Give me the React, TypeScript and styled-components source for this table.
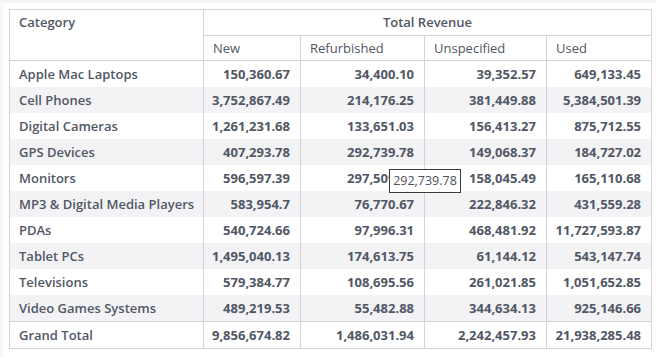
import React from 'react'
import styled, { createGlobalStyle } from 'styled-components';

const GlobalStyle = createGlobalStyle`
    html, body {
        margin: 0;
        padding: 0;
        background: #ffffff;
    }
    body {
        font-family: "Open Sans", "Noto Sans", sans-serif;
    }
`;

const Page = styled.div`
    position: relative;
    width: 656px;
    height: 357px;
    box-sizing: border-box;
    padding: 6px 6px 0 6px;
    border-top: 3px solid #f3f3f4;
    border-left: 3px solid #f7f7f8;
`;

const Table = styled.table`
    border-collapse: collapse;
    table-layout: fixed;
    width: 642px;
    border: 1px solid #d3d3db;
    color: #515764;
    font-size: 13px;
`;

const HeadCell = styled.th<{ $align?: string; $bold?: boolean; $sub?: boolean }>`
    height: ${(props) => (props.$sub ? '24px' : '25px')};
    padding: 0 9px;
    text-align: ${(props) => props.$align || 'left'};
    vertical-align: ${(props) => (props.$align === 'center' ? 'middle' : 'top')};
    line-height: ${(props) => (props.$sub ? '24px' : '25px')};
    font-weight: ${(props) => (props.$bold ? 600 : 400)};
    border: 1px solid #d3d3db;
    white-space: nowrap;
`;

const Row = styled.tr<{ $shade?: boolean; $total?: boolean }>`
    background-color: ${(props) => (props.$shade ? '#f3f3f6' : '#ffffff')};
    border-top: ${(props) => (props.$total ? '1px solid #d3d3db' : 'none')};
`;

const LabelCell = styled.td`
    height: 26px;
    padding: 0 9px;
    font-weight: 600;
    border-left: 1px solid #d3d3db;
    border-right: 1px solid #d3d3db;
    white-space: nowrap;
`;

const ValueCell = styled.td`
    height: 26px;
    padding: 0 10px 0 6px;
    text-align: right;
    font-weight: 700;
    border-left: 1px solid #d3d3db;
    border-right: 1px solid #d3d3db;
    white-space: nowrap;
`;

// hover tooltip over the Monitors / Refurbished cell
const Tooltip = styled.div`
    position: absolute;
    left: 386px;
    top: 166px;
    width: 72px;
    height: 24px;
    box-sizing: border-box;
    border: 1px solid #3a3a3a;
    background: #ffffff;
    color: #4a505c;
    font-size: 12.5px;
    line-height: 22px;
    text-align: center;
`;

const columns = ['New', 'Refurbished', 'Unspecified', 'Used'];

const rows: [string, string[]][] = [
    ['Apple Mac Laptops', ['150,360.67', '34,400.10', '39,352.57', '649,133.45']],
    ['Cell Phones', ['3,752,867.49', '214,176.25', '381,449.88', '5,384,501.39']],
    ['Digital Cameras', ['1,261,231.68', '133,651.03', '156,413.27', '875,712.55']],
    ['GPS Devices', ['407,293.78', '292,739.78', '149,068.37', '184,727.02']],
    ['Monitors', ['596,597.39', '297,509.15', '158,045.49', '165,110.68']],
    ['MP3 & Digital Media Players', ['583,954.7', '76,770.67', '222,846.32', '431,559.28']],
    ['PDAs', ['540,724.66', '97,996.31', '468,481.92', '11,727,593.87']],
    ['Tablet PCs', ['1,495,040.13', '174,613.75', '61,144.12', '543,147.74']],
    ['Televisions', ['579,384.77', '108,695.56', '261,021.85', '1,051,652.85']],
    ['Video Games Systems', ['489,219.53', '55,482.88', '344,634.13', '925,146.66']],
];

const totals = ['9,856,674.82', '1,486,031.94', '2,242,457.93', '21,938,285.48'];

const App: React.FC = () => {
    return (
        <Page>
            <GlobalStyle />
            <Table>
                <colgroup>
                    <col style={{ width: 194 }} />
                    <col style={{ width: 97 }} />
                    <col style={{ width: 124 }} />
                    <col style={{ width: 122 }} />
                    <col style={{ width: 105 }} />
                </colgroup>
                <thead>
                    <tr>
                        <HeadCell rowSpan={2} $bold>Category</HeadCell>
                        <HeadCell colSpan={4} $align="center" $bold>Total Revenue</HeadCell>
                    </tr>
                    <tr>
                        {columns.map((c) => (
                            <HeadCell key={c} $sub>{c}</HeadCell>
                        ))}
                    </tr>
                </thead>
                <tbody>
                    {rows.map(([label, values], i) => (
                        <Row key={label} $shade={i % 2 === 1}>
                            <LabelCell>{label}</LabelCell>
                            {values.map((v, j) => (
                                <ValueCell key={j}>{v}</ValueCell>
                            ))}
                        </Row>
                    ))}
                    <Row $total>
                        <LabelCell>Grand Total</LabelCell>
                        {totals.map((v, j) => (
                            <ValueCell key={j}>{v}</ValueCell>
                        ))}
                    </Row>
                </tbody>
            </Table>
            <Tooltip>292,739.78</Tooltip>
        </Page>
    );
};

export default App;
